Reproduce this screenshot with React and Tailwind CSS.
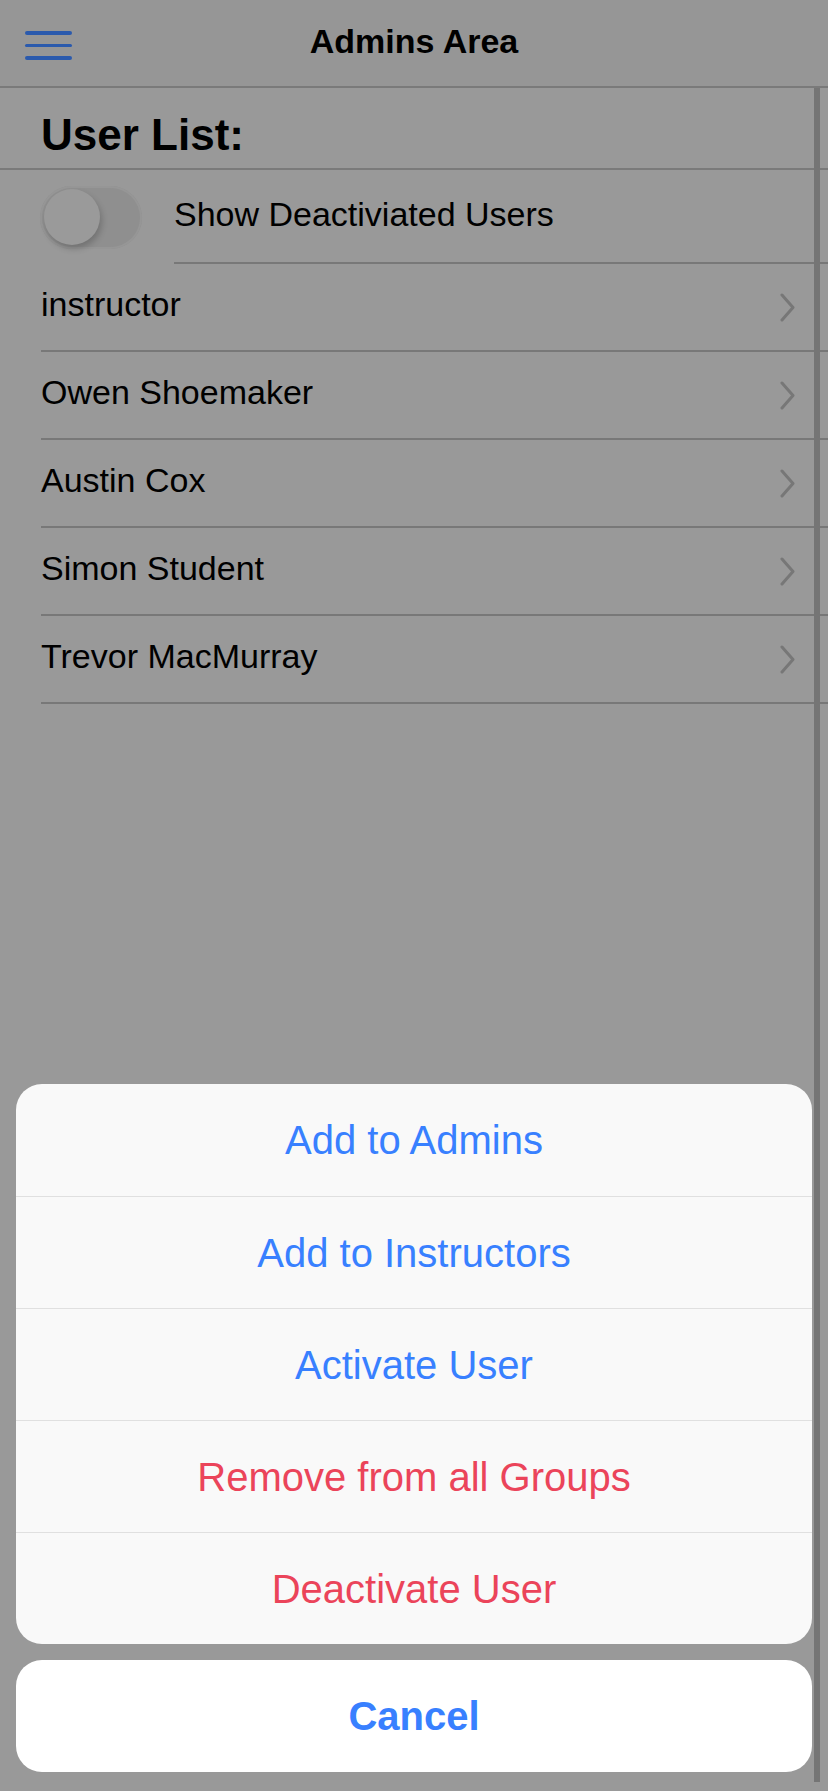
const users = ['instructor', 'Owen Shoemaker', 'Austin Cox', 'Simon Student', 'Trevor MacMurray'];

const actions = [
  { label: 'Add to Admins', danger: false },
  { label: 'Add to Instructors', danger: false },
  { label: 'Activate User', danger: false },
  { label: 'Remove from all Groups', danger: true },
  { label: 'Deactivate User', danger: true },
];

function Chevron() {
  return (
    <svg width="15" height="29" viewBox="0 0 15 29" fill="none" aria-hidden="true">
      <polyline points="2,2 13,14.5 2,27" stroke="#777777" strokeWidth="3" strokeLinecap="round" strokeLinejoin="round" />
    </svg>
  );
}

export default function App() {
  return (
    <div
      className="relative h-[1791px] w-full overflow-hidden bg-[#999999] text-black"
      style={{ fontFamily: '"Liberation Sans", Arial, sans-serif' }}
    >
      {/* Toolbar (dimmed by the backdrop) */}
      <header className="relative flex h-[88px] items-center justify-center border-b-2 border-[#7a7a7a] bg-[#969696] pb-[3px]">
        <button type="button" className="absolute left-[25px] top-[31px] flex w-[47px] flex-col gap-[9px]">
          <span className="block h-[3.5px] w-full rounded-full bg-[#2b5aad]" />
          <span className="block h-[3.5px] w-full rounded-full bg-[#2b5aad]" />
          <span className="block h-[3.5px] w-full rounded-full bg-[#2b5aad]" />
        </button>
        <h1 className="text-[34px] font-bold">Admins Area</h1>
      </header>

      {/* Content */}
      <main>
        <div className="flex h-[82px] items-center border-b-2 border-[#7a7a7a] pl-[41px] pt-[14px]">
          <h2 className="text-[44px] font-bold leading-none">User List:</h2>
        </div>

        <div className="flex h-[94px] items-center pl-[40px]">
          <div className="flex h-[63px] w-[102px] shrink-0 items-center rounded-full bg-[#8f8f8f] shadow-[inset_0_0_0_2px_#969696]">
            <div className="ml-[4px] h-[56px] w-[56px] rounded-full bg-[#9a9a9a] shadow-[2px_4px_6px_rgba(0,0,0,0.2)]" />
          </div>
          <div className="ml-[32px] flex h-full flex-1 items-center border-b-2 border-[#787878] pb-[4px]">
            <span className="text-[34px]">Show Deactiviated Users</span>
          </div>
        </div>

        <ul className="pl-[41px]">
          {users.map((name) => (
            <li key={name} className="flex h-[88px] items-center border-b-2 border-[#787878] pr-[33px]">
              <span className="flex-1 pb-[5px] text-[34px]">{name}</span>
              <Chevron />
            </li>
          ))}
        </ul>
      </main>

      {/* Scroll indicator */}
      <div className="absolute bottom-[9px] right-[8px] top-[88px] w-[6px] bg-[#757575]" />

      {/* Action sheet */}
      <div className="absolute bottom-[19px] left-[16px] right-[16px] flex flex-col gap-[16px]">
        <div className="overflow-hidden rounded-[26px] bg-[#f9f9f9]">
          {actions.map((a, i) => (
            <button
              key={a.label}
              type="button"
              className={`flex h-[112px] w-full items-center justify-center text-[40px] ${
                i > 0 ? 'border-t border-[#e0e0e0]' : ''
              } ${a.danger ? 'text-[#eb445a]' : 'text-[#3880ff]'}`}
            >
              {a.label}
            </button>
          ))}
        </div>
        <button
          type="button"
          className="flex h-[112px] w-full items-center justify-center rounded-[26px] bg-white text-[40px] font-bold text-[#3880ff]"
        >
          Cancel
        </button>
      </div>
    </div>
  );
}
